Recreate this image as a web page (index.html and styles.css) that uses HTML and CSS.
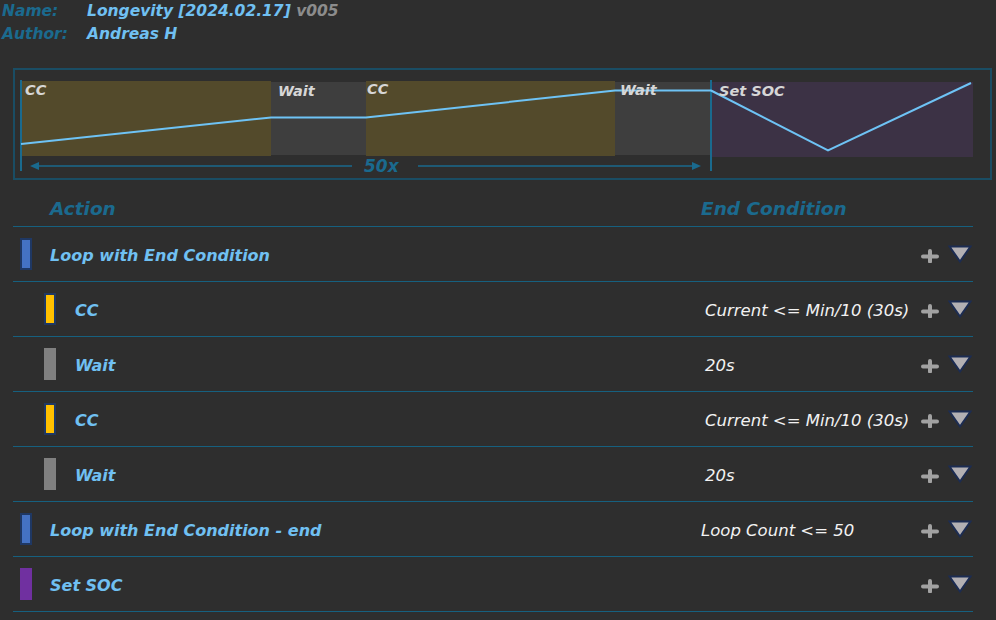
FILE: index.html
```html
<!DOCTYPE html>
<html>
<head>
<meta charset="utf-8">
<link rel="stylesheet" href="styles.css">
</head>
<body>
<div class="meta">
  <span class="key">Name:</span><span class="val">Longevity [2024.02.17] <span class="ver">v005</span></span>
  <span class="key">Author:</span><span class="val">Andreas H</span>
</div>

<div class="chart">
  <svg class="chart-svg" width="975" height="108" viewBox="15 70 975 108">
    <rect x="21" y="81" width="250" height="75" fill="#534a2b"/>
    <rect x="271" y="82" width="95" height="73" fill="#3e3e3e"/>
    <rect x="366" y="81" width="249" height="75" fill="#534a2b"/>
    <rect x="615" y="82" width="96" height="73" fill="#3e3e3e"/>
    <rect x="712" y="82" width="261" height="75" fill="#3c3245"/>
    <line x1="21" y1="80" x2="21" y2="171" stroke="#1a6a8e" stroke-width="2"/>
    <line x1="711" y1="80" x2="711" y2="171" stroke="#1a6a8e" stroke-width="2"/>
    <polyline points="21,144 271,117.5 366,117.5 615,90.5 711,90.5 712,91 828,150.5 971,83" fill="none" stroke="#6ec3f5" stroke-width="2"/>
    <line x1="34" y1="166" x2="352" y2="166" stroke="#1a6a8e" stroke-width="1.3"/>
    <polygon points="30,166 39,162 39,170" fill="#1a6a8e"/>
    <line x1="418" y1="166" x2="694" y2="166" stroke="#1a6a8e" stroke-width="1.3"/>
    <polygon points="701,166 692,162 692,170" fill="#1a6a8e"/>
    <text class="rep" x="364" y="172">50x</text>
    <text class="seg" x="25" y="95">CC</text>
    <text class="seg" x="278" y="96">Wait</text>
    <text class="seg" x="367" y="94">CC</text>
    <text class="seg" x="620" y="95">Wait</text>
    <text class="seg" x="719" y="96">Set SOC</text>
  </svg>
</div>

<div class="table">
  <div class="thead">
    <span class="th">Action</span>
    <span class="th th-end">End Condition</span>
    <span></span>
  </div>

  <div class="row">
    <span class="action"><span class="bar bar-loop"></span><span class="name">Loop with End Condition</span></span>
    <span class="cond"></span>
    <span class="acts"><svg class="plus" width="20" height="14" viewBox="0 0 20 14"><path d="M3 7.5H17M10 2V12.5" stroke="#a2a2a2" stroke-width="4" stroke-linecap="round"/></svg><svg class="tri" width="24" height="18" viewBox="0 0 24 18"><polygon points="1.5,1.5 22.5,1.5 12,16.5" fill="#b3b0b3" stroke="#1c2c52" stroke-width="2"/></svg></span>
  </div>

  <div class="row child">
    <span class="action"><span class="bar bar-cc"></span><span class="name">CC</span></span>
    <span class="cond">Current &lt;= Min/10 (30s)</span>
    <span class="acts"><svg class="plus" width="20" height="14" viewBox="0 0 20 14"><path d="M3 7.5H17M10 2V12.5" stroke="#a2a2a2" stroke-width="4" stroke-linecap="round"/></svg><svg class="tri" width="24" height="18" viewBox="0 0 24 18"><polygon points="1.5,1.5 22.5,1.5 12,16.5" fill="#b3b0b3" stroke="#1c2c52" stroke-width="2"/></svg></span>
  </div>

  <div class="row child">
    <span class="action"><span class="bar bar-wait"></span><span class="name">Wait</span></span>
    <span class="cond">20s</span>
    <span class="acts"><svg class="plus" width="20" height="14" viewBox="0 0 20 14"><path d="M3 7.5H17M10 2V12.5" stroke="#a2a2a2" stroke-width="4" stroke-linecap="round"/></svg><svg class="tri" width="24" height="18" viewBox="0 0 24 18"><polygon points="1.5,1.5 22.5,1.5 12,16.5" fill="#b3b0b3" stroke="#1c2c52" stroke-width="2"/></svg></span>
  </div>

  <div class="row child">
    <span class="action"><span class="bar bar-cc"></span><span class="name">CC</span></span>
    <span class="cond">Current &lt;= Min/10 (30s)</span>
    <span class="acts"><svg class="plus" width="20" height="14" viewBox="0 0 20 14"><path d="M3 7.5H17M10 2V12.5" stroke="#a2a2a2" stroke-width="4" stroke-linecap="round"/></svg><svg class="tri" width="24" height="18" viewBox="0 0 24 18"><polygon points="1.5,1.5 22.5,1.5 12,16.5" fill="#b3b0b3" stroke="#1c2c52" stroke-width="2"/></svg></span>
  </div>

  <div class="row child">
    <span class="action"><span class="bar bar-wait"></span><span class="name">Wait</span></span>
    <span class="cond">20s</span>
    <span class="acts"><svg class="plus" width="20" height="14" viewBox="0 0 20 14"><path d="M3 7.5H17M10 2V12.5" stroke="#a2a2a2" stroke-width="4" stroke-linecap="round"/></svg><svg class="tri" width="24" height="18" viewBox="0 0 24 18"><polygon points="1.5,1.5 22.5,1.5 12,16.5" fill="#b3b0b3" stroke="#1c2c52" stroke-width="2"/></svg></span>
  </div>

  <div class="row">
    <span class="action"><span class="bar bar-loop"></span><span class="name">Loop with End Condition - end</span></span>
    <span class="cond cond-loop">Loop Count &lt;= 50</span>
    <span class="acts"><svg class="plus" width="20" height="14" viewBox="0 0 20 14"><path d="M3 7.5H17M10 2V12.5" stroke="#a2a2a2" stroke-width="4" stroke-linecap="round"/></svg><svg class="tri" width="24" height="18" viewBox="0 0 24 18"><polygon points="1.5,1.5 22.5,1.5 12,16.5" fill="#b3b0b3" stroke="#1c2c52" stroke-width="2"/></svg></span>
  </div>

  <div class="row">
    <span class="action"><span class="bar bar-soc"></span><span class="name">Set SOC</span></span>
    <span class="cond"></span>
    <span class="acts"><svg class="plus" width="20" height="14" viewBox="0 0 20 14"><path d="M3 7.5H17M10 2V12.5" stroke="#a2a2a2" stroke-width="4" stroke-linecap="round"/></svg><svg class="tri" width="24" height="18" viewBox="0 0 24 18"><polygon points="1.5,1.5 22.5,1.5 12,16.5" fill="#b3b0b3" stroke="#1c2c52" stroke-width="2"/></svg></span>
  </div>
</div>
</body>
</html>
```

FILE: styles.css
```css
* { box-sizing: border-box; }

html, body {
  margin: 0;
  padding: 0;
  background: #2e2e2e;
  height: 100%;
  overflow: hidden;
}

body {
  font-family: "DejaVu Sans", "Liberation Sans", sans-serif;
  font-style: italic;
}

.meta {
  display: grid;
  grid-template-columns: 85px auto;
  padding: 0 0 0 2px;
  font-size: 15.5px;
  font-weight: bold;
  line-height: 23px;
}

.key { color: #1b6a8e; }
.val { color: #70c0f2; }
.ver { color: #8c8c8c; }

.chart {
  margin: 22px 0 0 13px;
  width: 979px;
  height: 112px;
  border: 2px solid #1a4d64;
}

.chart-svg { display: block; }

.seg {
  font-family: "DejaVu Sans", sans-serif;
  font-style: italic;
  font-weight: bold;
  font-size: 14.5px;
  fill: #d6d6d6;
}

.rep {
  font-family: "DejaVu Sans", sans-serif;
  font-style: italic;
  font-weight: bold;
  font-size: 17px;
  fill: #1a6a8e;
}

.table {
  margin: 10px 0 0 13px;
  width: 960px;
}

.thead, .row {
  display: grid;
  grid-template-columns: 688px 1fr auto;
  align-items: center;
  border-bottom: 1px solid #16607f;
}

.thead {
  height: 37px;
}

.th {
  color: #1b6a8e;
  font-weight: bold;
  font-size: 18.5px;
  padding-left: 37px;
}

.th.th-end {
  padding-left: 0;
}

.row {
  height: 55px;
}

.action {
  display: flex;
  align-items: center;
  padding-left: 7px;
}

.row.child .action {
  padding-left: 31px;
}

.bar {
  width: 12px;
  height: 32px;
  flex: none;
}

.bar-loop { background: #4472c4; border: 2px solid #1f3864; }
.bar-cc { background: #ffc000; border: 2px solid #1f3864; }
.bar-wait { background: #808080; }
.bar-soc { background: #7030a0; }

.name {
  margin-left: 18px;
  margin-top: 3px;
  color: #70c0f2;
  font-weight: bold;
  font-size: 16px;
}

.row.child .name {
  margin-left: 19px;
}

.cond {
  color: #f2f2f2;
  font-size: 16.5px;
  padding-left: 4px;
  margin-top: 2px;
}

.cond.cond-loop {
  padding-left: 0;
}

.acts {
  display: flex;
  align-items: center;
  gap: 8px;
  padding-right: 1px;
}

.plus, .tri { display: block; }
.plus { margin-top: 3px; }
```
